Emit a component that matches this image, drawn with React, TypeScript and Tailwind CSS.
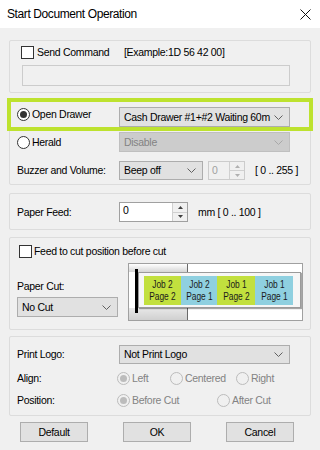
import React from 'react'

// 小型下拉箭头
function Chevron({ color = '#606060' }: { color?: string }) {
  return (
    <svg width="9" height="5" viewBox="0 0 9 5">
      <polyline points="0.5,0.5 4.5,4.5 8.5,0.5" fill="none" stroke={color} strokeWidth="1" />
    </svg>
  )
}

function Radio({ checked = false, disabled = false }: { checked?: boolean; disabled?: boolean }) {
  return (
    <span
      className={`w-[13px] h-[13px] rounded-full border flex items-center justify-center shrink-0 ${
        disabled ? 'border-[#bcbcbc] bg-[#f0f0f0]' : 'border-[#333333] bg-white'
      }`}
    >
      {checked && (
        <span className={`w-[7px] h-[7px] rounded-full ${disabled ? 'bg-[#bcbcbc]' : 'bg-[#333333]'}`} />
      )}
    </span>
  )
}

function Checkbox() {
  return <span className="w-[13px] h-[13px] border border-[#333333] bg-white shrink-0" />
}

function Combo({ text, width, disabled = false, h = 'h-[20px]' }: { text: string; width: string; disabled?: boolean; h?: string }) {
  return (
    <div
      className={`${width} ${h} border flex items-center justify-between pl-[4px] pr-[6px] ${
        disabled ? 'bg-[#cccccc] border-[#bfbfbf] text-[#838383]' : 'bg-[#e1e1e1] border-[#adadad]'
      }`}
    >
      <span className="whitespace-nowrap">{text}</span>
      <Chevron color={disabled ? '#a8a8a8' : '#606060'} />
    </div>
  )
}

function SpinButtons({ disabled = false }: { disabled?: boolean }) {
  const c = disabled ? '#b0b0b0' : '#404040'
  return (
    <div className="w-[15px] h-full flex flex-col border-l border-[#d0d0d0]">
      <div className="flex-1 flex items-center justify-center bg-[#f0f0f0] border-b border-[#d0d0d0]">
        <svg width="5" height="3" viewBox="0 0 5 3"><polygon points="0,3 2.5,0 5,3" fill={c} /></svg>
      </div>
      <div className="flex-1 flex items-center justify-center bg-[#f0f0f0]">
        <svg width="5" height="3" viewBox="0 0 5 3"><polygon points="0,0 2.5,3 5,0" fill={c} /></svg>
      </div>
    </div>
  )
}

// 纸张裁切示意图
function CutPicture() {
  const cells = [
    { job: 'Job 2', page: 'Page 2', bg: 'bg-[#c2e03e]', w: 'w-[37px]' },
    { job: 'Job 2', page: 'Page 1', bg: 'bg-[#8fd0e0]', w: 'w-[36px]' },
    { job: 'Job 1', page: 'Page 2', bg: 'bg-[#c2e03e]', w: 'w-[38px]' },
    { job: 'Job 1', page: 'Page 1', bg: 'bg-[#8fd0e0]', w: 'w-[38px]' },
  ]
  return (
    <div className="ml-[10px] w-[175px] h-[58px] border border-[#a0a0a0] bg-white relative overflow-hidden">
      <div className="absolute left-0 top-0 w-[58px] h-[8px] bg-gradient-to-b from-white to-[#d6d6d6]" />
      <div className="absolute left-0 top-[44px] w-[58px] h-[12px] bg-gradient-to-b from-[#e8e8e8] to-[#d0d0d0]" />
      <div className="absolute left-[58px] top-0 w-px h-full bg-[#6a6a6a]" />
      <div className="absolute left-[6px] top-[5px] w-[3px] h-[44px] bg-black" />
      <div className="absolute left-[9px] top-[8px] w-[163px] h-[36px] bg-[#f6f6f6] border border-[#9a9a9a] shadow-[1px_1px_1px_rgba(0,0,0,0.35)] flex items-center pl-[5px]">
        {cells.map((c, i) => (
          <div
            key={i}
            className={`${c.w} h-[29px] ${c.bg} flex flex-col items-center justify-center leading-[12px] text-[#1a1a1a]`}
          >
            <span className="text-[11px] tracking-normal scale-x-[0.76] whitespace-nowrap">{c.job}</span>
            <span className="text-[11px] tracking-normal scale-x-[0.76] whitespace-nowrap">{c.page}</span>
          </div>
        ))}
      </div>
    </div>
  )
}

export default function App() {
  return (
    <div className="w-[320px] h-[450px] bg-[#f0f0f0] overflow-hidden text-black text-[10.5px] tracking-[-0.3px] leading-[13px] whitespace-nowrap font-['Liberation_Sans',Arial,sans-serif]">
      {/* 标题栏 */}
      <div className="h-[28px] bg-white flex items-center justify-between pl-[7px] pr-[9px]">
        <span className="text-[12px] tracking-[-0.4px]">Start Document Operation</span>
        <svg width="11" height="11" viewBox="0 0 11 11">
          <path d="M0.5 0.5 L10.5 10.5 M10.5 0.5 L0.5 10.5" stroke="#111" strokeWidth="1" />
        </svg>
      </div>

      <div className="px-[9px] pt-[12px] flex flex-col">
        {/* 发送命令 */}
        <div className="h-[53px] border border-[#dcdcdc] rounded-[2px] pl-[11px] pt-[5px] flex flex-col">
          <div className="flex items-center h-[13px]">
            <Checkbox />
            <span className="ml-[3px] w-[87px]">Send Command</span>
            <span>[Example:1D 56 42 00]</span>
          </div>
          <div className="mt-[6px] ml-px w-[268px] h-[21px] border border-[#cccccc] bg-[#f0f0f0]" />
        </div>

        {/* 钱箱 / 蜂鸣器 */}
        <div className="mt-[5px] h-[87px] border border-[#dcdcdc] rounded-[2px] flex flex-col">
          <div className="-mx-[3px] -mt-px h-[33px] border-[4px] border-[#bde22f] flex items-center pl-[6px]">
            <div className="w-[102px] flex items-center">
              <Radio checked />
              <span className="ml-[2px]">Open Drawer</span>
            </div>
            <div className="self-end">
              <Combo text="Cash Drawer #1+#2 Waiting 60m" width="w-[171px]" />
            </div>
          </div>
          <div className="mt-px h-[20px] flex items-center pl-[7px]">
            <div className="w-[102px] flex items-center">
              <Radio />
              <span className="ml-[2px]">Herald</span>
            </div>
            <Combo text="Disable" width="w-[171px]" disabled />
          </div>
          <div className="mt-[9px] h-[19px] flex items-center pl-[7px]">
            <span className="w-[102px]">Buzzer and Volume:</span>
            <Combo text="Beep off" width="w-[84px]" h="h-[19px]" />
            <div className="ml-[5px] w-[37px] h-[19px] border border-[#cccccc] bg-[#f0f0f0] flex justify-between">
              <span className="pl-[3px] pt-[2px] text-[#a0a0a0]">0</span>
              <SpinButtons disabled />
            </div>
            <span className="ml-[10px]">[ 0 .. 255 ]</span>
          </div>
        </div>

        {/* 走纸 */}
        <div className="mt-[8px] h-[37px] border border-[#dcdcdc] rounded-[2px] pl-[7px] pt-[8px] flex">
          <div className="flex items-center h-[20px]">
            <span className="w-[102px]">Paper Feed:</span>
            <div className="w-[69px] h-[20px] border border-[#a0a0a0] bg-white flex justify-between">
              <span className="pl-[3px] pt-px">0</span>
              <SpinButtons />
            </div>
            <span className="ml-[10px]">mm [ 0 .. 100 ]</span>
          </div>
        </div>

        {/* 切纸 */}
        <div className="mt-[7px] h-[93px] border border-[#dcdcdc] rounded-[2px] pt-[7px] flex flex-col">
          <div className="flex items-center h-[13px] pl-[9px]">
            <Checkbox />
            <span className="ml-[2px]">Feed to cut position before cut</span>
          </div>
          <div className="mt-[5px] flex items-start">
            <div className="pl-[7px] w-[108px] flex flex-col">
              <span className="mt-[17px]">Paper Cut:</span>
              <div className="mt-[4px]">
                <Combo text="No Cut" width="w-[101px]" />
              </div>
            </div>
            <CutPicture />
          </div>
        </div>

        {/* 打印 Logo */}
        <div className="mt-[6px] h-[80px] border border-[#dcdcdc] rounded-[2px] pl-[7px] pt-[8px] flex flex-col">
          <div className="flex items-center">
            <span className="w-[102px]">Print Logo:</span>
            <Combo text="Not Print Logo" width="w-[171px]" h="h-[19px]" />
          </div>
          <div className="mt-[7px] h-[14px] flex items-center">
            <span className="w-[100px]">Align:</span>
            <div className="w-[53px] flex items-center">
              <Radio checked disabled />
              <span className="ml-[2px] text-[#838383]">Left</span>
            </div>
            <div className="w-[66px] flex items-center">
              <Radio disabled />
              <span className="ml-[2px] text-[#838383]">Centered</span>
            </div>
            <div className="flex items-center">
              <Radio disabled />
              <span className="ml-[2px] text-[#838383]">Right</span>
            </div>
          </div>
          <div className="mt-[8px] h-[14px] flex items-center">
            <span className="w-[100px]">Position:</span>
            <div className="w-[100px] flex items-center">
              <Radio checked disabled />
              <span className="ml-[2px] text-[#838383]">Before Cut</span>
            </div>
            <div className="flex items-center">
              <Radio disabled />
              <span className="ml-[2px] text-[#838383]">After Cut</span>
            </div>
          </div>
        </div>

        {/* 按钮 */}
        <div className="mt-[6px] pl-[11px] flex gap-[35px]">
          {['Default', 'OK', 'Cancel'].map(b => (
            <button key={b} className="w-[68px] h-[20px] bg-[#e1e1e1] border border-[#adadad] flex items-center justify-center">
              {b}
            </button>
          ))}
        </div>
      </div>
    </div>
  )
}
